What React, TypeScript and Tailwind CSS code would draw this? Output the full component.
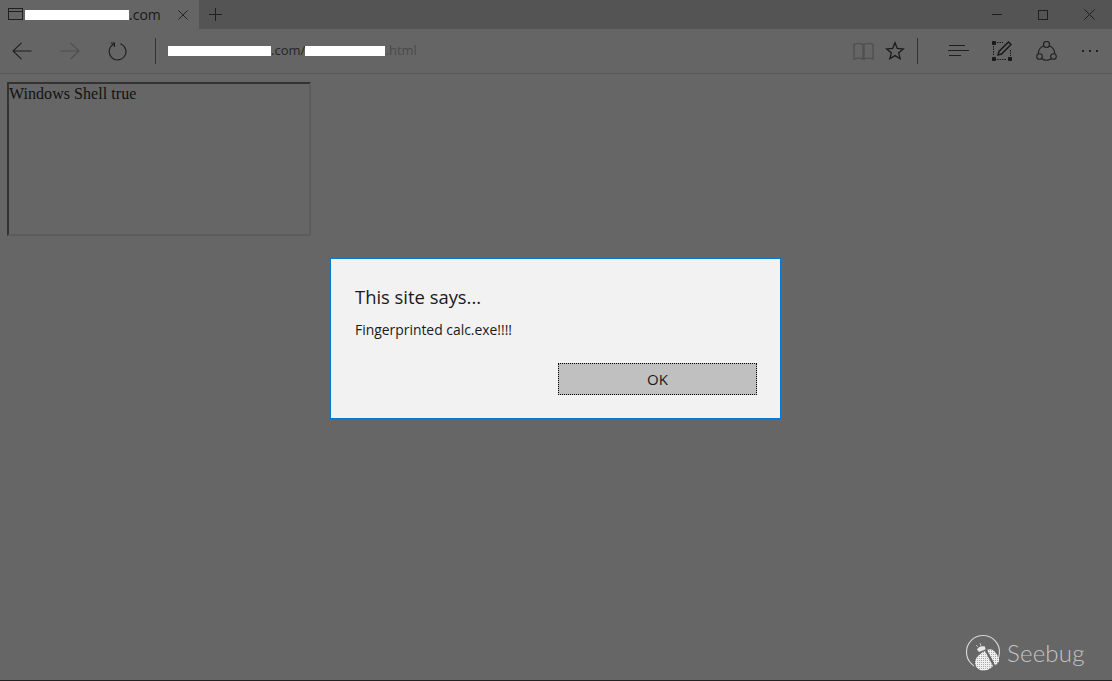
function TabIcon() {
  return (
    <svg width="15" height="13" viewBox="0 0 15 13" fill="none" stroke="#1f1f1f" strokeWidth="1">
      <rect x="0.5" y="0.5" width="14" height="11" />
      <path d="M0.5 3.5h14" />
    </svg>
  );
}

function Cross({ size = 11, stroke = "#1f1f1f" }: { size?: number; stroke?: string }) {
  return (
    <svg width={size} height={size} viewBox="0 0 11 11" fill="none" stroke={stroke} strokeWidth="1">
      <path d="M0.5 0.5l10 10M10.5 0.5l-10 10" />
    </svg>
  );
}

function Arrow({ dir, stroke }: { dir: "left" | "right"; stroke: string }) {
  return (
    <svg width="20" height="18" viewBox="0 0 20 18" fill="none" stroke={stroke} strokeWidth="1.1">
      {dir === "left" ? <path d="M19.5 9H1M9.5 0.8L1 9l8.5 8.2" /> : <path d="M0.5 9H19M10.5 0.8L19 9l-8.5 8.2" />}
    </svg>
  );
}

function Refresh() {
  return (
    <svg width="19" height="19" viewBox="0 0 20 20" fill="none" stroke="#1f1f1f" strokeWidth="1.2">
      <path d="M6.2 2.2A8.8 8.8 0 1 0 13 1.8" />
      <path d="M2.8 1h4v4.2" />
    </svg>
  );
}

function ReadingView() {
  return (
    <svg width="21" height="19" viewBox="0 0 21 19" fill="none" stroke="#505050" strokeWidth="1.4">
      <path d="M1 2.5C4 1 7 1 10 2.5V17C7 15.8 4 15.8 1 17ZM11 2.5C14 1 17 1 20 2.5V17C17 15.8 14 15.8 11 17Z" />
    </svg>
  );
}

function Star() {
  return (
    <svg width="20" height="20" viewBox="0 0 20 20" fill="none" stroke="#1a1a1a" strokeWidth="1.3">
      <path d="M10 1.8l2.3 5.6 6 .5-4.6 3.9 1.4 5.9L10 14.6l-5.1 3.1 1.4-5.9L1.7 7.9l6-.5z" />
    </svg>
  );
}

function Hub() {
  return (
    <svg width="21" height="12" viewBox="0 0 21 12" fill="none" stroke="#1f1f1f" strokeWidth="1">
      <path d="M1 0.5h16M0 5.5h21M1 10.5h12" />
    </svg>
  );
}

function Note() {
  return (
    <svg width="20" height="20" viewBox="0 0 20 20" fill="none" stroke="#1a1a1a">
      <path d="M5 1.5h6M1.5 5v10M18.5 9v6M5 18.5h10" strokeDasharray="1.5 1" />
      <path d="M0.5 0.5h3v3h-3zM0.5 16.5h3v3h-3zM16.5 16.5h3v3h-3z" fill="#1a1a1a" />
      <path d="M6 14l1-3.5L16.5 1l2.5 2.5L9.5 13z" strokeWidth="1.5" />
    </svg>
  );
}

function Share() {
  return (
    <svg width="21" height="21" viewBox="0 0 21 21" fill="none" stroke="#1f1f1f" strokeWidth="1.1">
      <circle cx="10.5" cy="3.5" r="3" />
      <circle cx="3.5" cy="15.5" r="2.8" />
      <circle cx="17.5" cy="15.5" r="2.8" />
      <path d="M7.7 4.8A9 9 0 0 0 2.2 13M13.3 4.8A9 9 0 0 1 18.8 13M5.8 17.8a9 9 0 0 0 9.4 0" />
    </svg>
  );
}

// ladybug in a ring, wings are dithered in the reference
function SeebugMark() {
  return (
    <svg width="37" height="38" viewBox="0 0 37 38" fill="none">
      <defs>
        <pattern id="dither" width="2" height="2" patternUnits="userSpaceOnUse">
          <rect width="2" height="2" fill="#f0f0f0" />
          <rect width="1" height="1" fill="#a8a8a8" />
        </pattern>
      </defs>
      <circle cx="18" cy="18" r="16.5" stroke="#d4d4d4" strokeWidth="1.2" />
      <path d="M21 16L30 32C26 37 21 38 15 38C11 36 8 32 8.5 28C9 23 13 19 16 17Z" fill="#666666" />
      <path d="M20 17L28 32C25 35.5 21 37 16.5 36.5C12.5 35.5 10 32 10 28.5C10.5 24 13 20.5 20 17Z" fill="url(#dither)" />
      <path d="M22 16C25 14.5 28 15 30 18C33 21 34.5 25 34 27.5L30.5 31.5Z" fill="url(#dither)" />
      <path d="M12 15.5C13 13 16 11.5 20 12.5L20.5 15.5L14 18Z" fill="#e6e6e6" />
      <path d="M16 12l-1-3M13 13l-2-2" stroke="#d4d4d4" strokeWidth="0.8" />
    </svg>
  );
}

export default function App() {
  return (
    <div className="relative h-[681px] w-[1112px] overflow-hidden bg-[#666666] font-['Open_Sans','Noto_Sans',sans-serif]">
      {/* tab strip */}
      <div className="flex h-[29px] items-stretch bg-[#545454]">
        <div className="flex w-[199px] items-center bg-[#656565] pl-2">
          <TabIcon />
          <div className="ml-[2px] flex w-[153px] items-center text-[14px] text-[#1a1a1a]">
            <span className="h-[10px] w-[104px] bg-white" />
            <span>.com</span>
          </div>
          <Cross size={10} />
        </div>
        <div className="ml-[10px] flex items-center">
          <svg width="13" height="13" viewBox="0 0 13 13" fill="none" stroke="#1f1f1f" strokeWidth="1">
            <path d="M6.5 0v13M0 6.5h13" />
          </svg>
        </div>
        <div className="ml-auto flex items-center">
          <div className="mr-[36px] h-px w-[10px] bg-[#1f1f1f]" />
          <div className="mr-[36px] h-[10px] w-[10px] border border-[#1f1f1f]" />
          <div className="mr-[17px]">
            <Cross size={11} />
          </div>
        </div>
      </div>

      {/* address bar */}
      <div className="flex h-[45px] items-center border-b border-[#575757] bg-[#656565]">
        <div className="ml-3">
          <Arrow dir="left" stroke="#1f1f1f" />
        </div>
        <div className="ml-[28px]">
          <Arrow dir="right" stroke="#4e4e4e" />
        </div>
        <div className="ml-[28px]">
          <Refresh />
        </div>
        <div className="ml-[28px] h-[26px] w-px bg-[#333333]" />
        <div className="ml-3 flex items-center text-[13px] text-[#262626]">
          <span className="h-[10px] w-[103px] bg-white" />
          <span>.com/</span>
          <span className="relative z-10 -mr-[7px] h-[10px] w-[80px] bg-white" />
          <span className="text-[#4a4a4a]">e.html</span>
        </div>
        <div className="ml-auto flex items-center">
          <ReadingView />
          <div className="ml-[11px]">
            <Star />
          </div>
          <div className="ml-3 h-[26px] w-px bg-[#333333]" />
          <div className="ml-[30px]">
            <Hub />
          </div>
          <div className="ml-[23px]">
            <Note />
          </div>
          <div className="ml-[24px]">
            <Share />
          </div>
          <div className="ml-[25px] mr-[14px] flex gap-[5px]">
            <span className="h-[2px] w-[2px] bg-[#1f1f1f]" />
            <span className="h-[2px] w-[2px] bg-[#1f1f1f]" />
            <span className="h-[2px] w-[2px] bg-[#1f1f1f]" />
          </div>
        </div>
      </div>

      {/* page content */}
      <div className="pl-[7px] pt-2">
        <div className="h-[154px] w-[304px] border-2 border-t-[#333333] border-l-[#333333] border-r-[#5c5c5c] border-b-[#5c5c5c] pt-[1px] font-['Liberation_Serif',serif] text-[16px] leading-[18px] tracking-[0.05px] text-[#111111]">
          Windows Shell true
        </div>
      </div>

      {/* alert dialog */}
      <div className="absolute left-[330px] top-[258px] h-[161px] w-[451px] border border-[#0078d7] bg-[#f2f2f2] pl-[24px] pt-[25px] text-[#1a1a1a]">
        <div className="text-[18.4px] leading-[26px]">This site says...</div>
        <div className="mt-[10px] text-[13.9px] leading-[20px]">Fingerprinted calc.exe!!!!</div>
        <div className="absolute left-[227px] top-[104px] flex h-[32px] w-[199px] items-center justify-center border border-dotted border-black bg-[#c0c0c0] text-[15px]">
          OK
        </div>
      </div>

      {/* watermark */}
      <div className="absolute left-[965px] top-[634px] flex items-center">
        <SeebugMark />
        <span className="ml-[5px] font-['Lato',sans-serif] text-[24px] font-light leading-none tracking-[0.2px] text-[#c4c4c4]">
          Seebug
        </span>
      </div>
      <div className="absolute bottom-0 left-0 h-px w-full bg-[#222222]" />
    </div>
  );
}
